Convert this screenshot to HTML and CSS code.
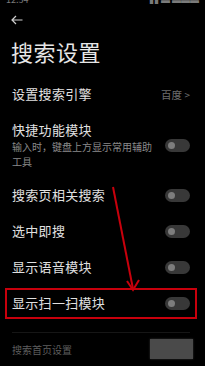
FILE: index.html
```html
<!DOCTYPE html>
<html lang="zh">
<head>
<meta charset="utf-8">
<link rel="stylesheet" href="styles.css">
</head>
<body>
<div class="page">
  <div class="status">
    <span class="status-time">12:34</span>
    <span class="status-icons">▮▮ ▬ ▬▬▬</span>
  </div>
  <div class="header">
    <svg class="back" width="12" height="10" viewBox="0 0 12 10"><path d="M11.5 5H1M5 1L1 5L5 9" fill="none" stroke="#cfcfcf" stroke-width="1.2"/></svg>
  </div>
  <h1 class="title">搜索设置</h1>

  <div class="row">
    <span class="label">设置搜索引擎</span>
    <span class="value">百度 <span class="chev">&gt;</span></span>
  </div>

  <div class="row row-multi">
    <div class="texts">
      <div class="label">快捷功能模块</div>
      <div class="sub">输入时，键盘上方显示常用辅助工具</div>
    </div>
    <span class="toggle"></span>
  </div>

  <div class="row">
    <span class="label">搜索页相关搜索</span>
    <span class="toggle"></span>
  </div>

  <div class="row">
    <span class="label">选中即搜</span>
    <span class="toggle"></span>
  </div>

  <div class="row">
    <span class="label">显示语音模块</span>
    <span class="toggle"></span>
  </div>

  <div class="row highlight">
    <span class="label">显示扫一扫模块</span>
    <span class="toggle"></span>
  </div>

  <div class="divider"></div>

  <div class="footer-row">
    <span class="section">搜索首页设置</span>
    <span class="blur-box"></span>
  </div>

  <svg class="annot-arrow" width="205" height="366" viewBox="0 0 205 366">
    <path d="M113 187L133 289" stroke="#c8000c" stroke-width="2" fill="none"/>
    <path d="M127 281L133 290L139 280" stroke="#c8000c" stroke-width="2" fill="none"/>
  </svg>
</div>
</body>
</html>
```
FILE: styles.css
```css
html, body {
  margin: 0;
  padding: 0;
  background: #000;
}
body {
  font-family: "Noto Sans CJK SC", "Noto Sans", sans-serif;
  color: #e2e2e2;
}
.page {
  position: relative;
  width: 205px;
  height: 366px;
  overflow: hidden;
  background: #000;
}
.status {
  height: 4px;
  overflow: hidden;
  display: flex;
  justify-content: space-between;
  padding: 0 6px;
  color: #7a7a7a;
  font-size: 9px;
  line-height: 9px;
}
.status-time,
.status-icons {
  margin-top: -5px;
}
.header {
  height: 32px;
  display: flex;
  align-items: center;
  padding-left: 11px;
}
.back {
  display: block;
}
.title {
  margin: 0;
  padding-left: 11px;
  font-size: 22px;
  font-weight: 400;
  line-height: 30px;
  height: 40px;
  color: #e6e6e6;
  letter-spacing: 0.5px;
}
.row {
  height: 36px;
  display: flex;
  align-items: center;
  justify-content: space-between;
  padding: 0 15px 0 12px;
  position: relative;
}
.label {
  font-size: 13px;
  line-height: 14px;
  color: #e0e0e0;
  letter-spacing: 0.3px;
}
.value {
  font-size: 10.5px;
  color: #6e6e6e;
}
.chev {
  font-size: 10px;
}
.row-multi {
  height: auto;
  padding-top: 11px;
  padding-bottom: 8px;
  align-items: flex-start;
}
.row-multi .texts {
  width: 142px;
}
.row-multi .toggle {
  margin-top: 16px;
}
.sub {
  margin-top: 2px;
  font-size: 10px;
  line-height: 15px;
  color: #8a8a8a;
}
.toggle {
  flex: none;
  width: 25px;
  height: 13px;
  border-radius: 7px;
  background: #383838;
  position: relative;
}
.toggle::after {
  content: "";
  position: absolute;
  left: 3px;
  top: 3px;
  width: 7px;
  height: 7px;
  border-radius: 50%;
  background: #7d7d7d;
}
.highlight::before {
  content: "";
  position: absolute;
  left: 5px;
  right: 8px;
  top: 3px;
  bottom: 2px;
  border: 2px solid #c8000c;
}
.divider {
  margin: 11px 15px 0 12px;
  height: 1px;
  background: #161616;
}
.footer-row {
  display: flex;
  justify-content: space-between;
  align-items: center;
  padding: 6px 12px 0 12px;
}
.section {
  font-size: 10px;
  color: #5e5e5e;
}
.blur-box {
  width: 43px;
  height: 20px;
  background: #4a4a4a;
  box-shadow: 0 0 2px #333;
}
.annot-arrow {
  position: absolute;
  left: 0;
  top: 0;
  pointer-events: none;
}
```
